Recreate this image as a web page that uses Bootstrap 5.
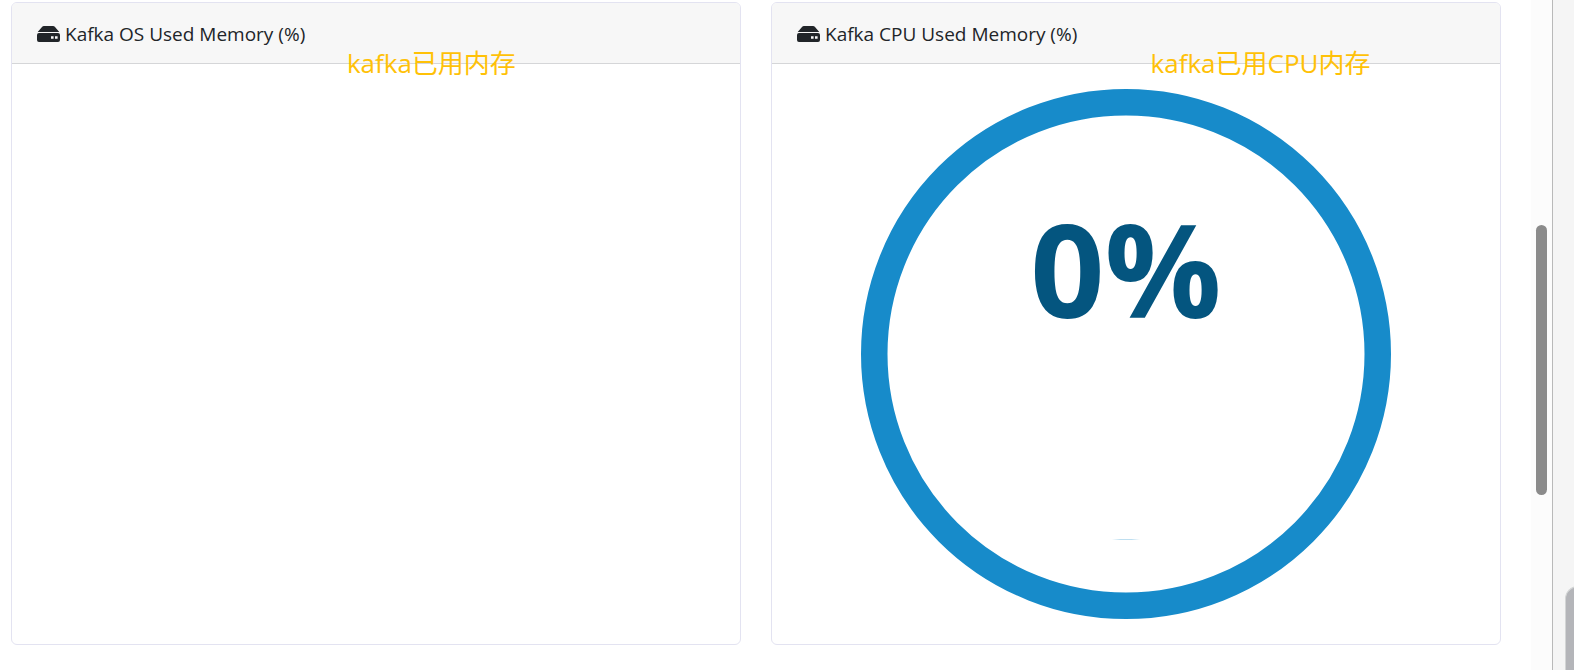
<!DOCTYPE html>
<html lang="en">
<head>
<meta charset="utf-8">
<meta name="viewport" content="width=device-width, initial-scale=1">
<title>Kafka Dashboard</title>
<link href="https://cdn.jsdelivr.net/npm/bootstrap@5.3.0/dist/css/bootstrap.min.css" rel="stylesheet">
<style>
  body { font-family: "Open Sans", "Noto Sans CJK SC", sans-serif; color: #212529; }
  .dashboard { padding: 2px 30px 26px 11px; }
  .dashboard .row { --bs-gutter-x: 30px; }
  .panel { border-color: #e3e3f1; border-radius: 6px; }
  .panel .card-header { padding: 16px 25px 14px; gap: 5px; font-size: 19px; line-height: 30px; background: #f7f7f7; border-color: #d5d6d8; }
  .panel .card-body { padding: 25px; }
  .drive { width: 23px; height: 16px; }
  .note { position: absolute; top: 42px; font-size: 26px; line-height: 36px; color: #ffc107; white-space: nowrap; }
  .note-os { left: 46%; }
  .note-cpu { left: 52%; }
  .gauge { display: block; width: 530px; max-width: 100%; height: auto; margin: 0 auto; }
  .gauge text { font-weight: 700; font-size: 130px; fill: #04557f; }
  .gauge-wrap { padding-right: 20px; }
  .track { width: 21px; background: #fcfcfc; padding: 225px 0 0 5px; }
  .thumb { width: 11px; height: 270px; border-radius: 6px; background: #8b8b8b; }
  .edge { width: 22px; background: #f5f5f5; border-left: 1px solid #b9b9b9; padding-left: 12px; overflow: hidden; }
  .tab { height: 85px; width: 40px; background: #b4b5b9; border: 1px solid #d3d5d5; border-radius: 13px 0 0 0; border-width: 1px 0 0 1px; }
</style>
</head>
<body>
<div class="d-flex min-vh-100">
  <main class="dashboard flex-grow-1">
    <div class="row h-100">
      <section class="col-6">
        <div class="card panel h-100">
          <div class="card-header d-flex align-items-center">
            <svg class="drive" viewBox="0 0 23 16" aria-hidden="true"><path fill="#212529" d="M5 1Q5.700 0 7 0h9q1.300 0 2 1L22.300 6H.7ZM2 7h19q2 0 2 2v5q0 2-2 2H2q-2 0-2-2V9q0-2 2-2Z"/><path fill="#f7f7f7" d="M14 10.200h2.600v2.600H14zM18 10.200h2.600v2.600H18z"/></svg>
            <span>Kafka OS Used Memory (%)</span>
          </div>
          <div class="card-body"></div>
          <span class="note note-os">kafka已用内存</span>
        </div>
      </section>
      <section class="col-6">
        <div class="card panel h-100">
          <div class="card-header d-flex align-items-center">
            <svg class="drive" viewBox="0 0 23 16" aria-hidden="true"><path fill="#212529" d="M5 1Q5.700 0 7 0h9q1.300 0 2 1L22.300 6H.7ZM2 7h19q2 0 2 2v5q0 2-2 2H2q-2 0-2-2V9q0-2 2-2Z"/><path fill="#f7f7f7" d="M14 10.200h2.600v2.600H14zM18 10.200h2.600v2.600H18z"/></svg>
            <span>Kafka CPU Used Memory (%)</span>
          </div>
          <div class="card-body">
            <div class="gauge-wrap">
              <svg class="gauge" viewBox="0 0 530 530" role="img" aria-label="CPU used memory: 0%">
                <defs><linearGradient id="ripple"><stop offset="0" stop-color="#178bca" stop-opacity="0"/><stop offset=".3" stop-color="#178bca" stop-opacity=".28"/><stop offset=".7" stop-color="#178bca" stop-opacity=".28"/><stop offset="1" stop-color="#178bca" stop-opacity="0"/></linearGradient></defs>
                <circle cx="265" cy="265" r="251.750" fill="none" stroke="#178bca" stroke-width="26.500"/>
                <text x="265" y="229" text-anchor="middle">0%</text>
                <rect x="251" y="450" width="28" height="1" fill="url(#ripple)"/>
              </svg>
            </div>
          </div>
          <span class="note note-cpu">kafka已用CPU内存</span>
        </div>
      </section>
    </div>
  </main>
  <div class="track flex-shrink-0"><div class="thumb"></div></div>
  <div class="edge flex-shrink-0 d-flex align-items-end"><div class="tab flex-shrink-0"></div></div>
</div>
<script src="https://cdn.jsdelivr.net/npm/bootstrap@5.3.0/dist/js/bootstrap.bundle.min.js"></script>
</body>
</html>
